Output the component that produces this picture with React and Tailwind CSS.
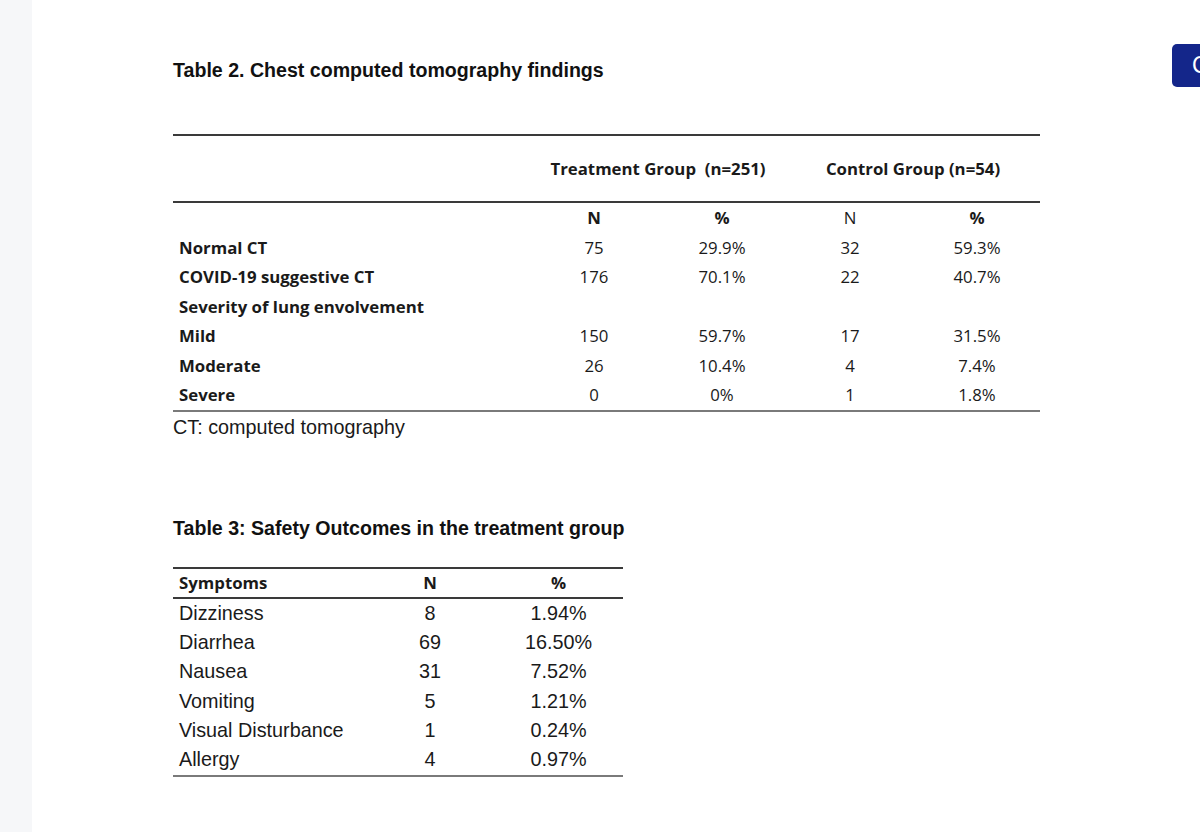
const calibri = { fontFamily: '"Open Sans", Lato, "Liberation Sans", sans-serif' };

const table2Rows = [
  ['Normal CT', '75', '29.9%', '32', '59.3%'],
  ['COVID-19 suggestive CT', '176', '70.1%', '22', '40.7%'],
  ['Severity of lung envolvement', '', '', '', ''],
  ['Mild', '150', '59.7%', '17', '31.5%'],
  ['Moderate', '26', '10.4%', '4', '7.4%'],
  ['Severe', '0', '0%', '1', '1.8%'],
];

const table3Rows = [
  ['Dizziness', '8', '1.94%'],
  ['Diarrhea', '69', '16.50%'],
  ['Nausea', '31', '7.52%'],
  ['Vomiting', '5', '1.21%'],
  ['Visual Disturbance', '1', '0.24%'],
  ['Allergy', '4', '0.97%'],
];

function ChestTable() {
  return (
    <div className="w-[867px]">
      <div className="h-[2px] bg-[#3a3a3a]" />
      {/* group header */}
      <div className="grid grid-cols-[357px_256px_254px] h-[65px] items-center text-[16.8px] font-bold text-[#1a1a1a]" style={calibri}>
        <div />
        <div className="text-center">Treatment Group&nbsp;&nbsp;(n=251)</div>
        <div className="text-center">Control Group (n=54)</div>
      </div>
      <div className="h-[2px] bg-[#3a3a3a]" />
      <div className="text-[16.8px] text-[#1a1a1a]" style={calibri}>
        <div className="grid grid-cols-[357px_128px_128px_128px_126px] h-[29.5px] items-center">
          <div />
          <div className="text-center font-bold">N</div>
          <div className="text-center font-bold">%</div>
          <div className="text-center">N</div>
          <div className="text-center font-bold">%</div>
        </div>
        {table2Rows.map((r) => (
          <div key={r[0]} className="grid grid-cols-[357px_128px_128px_128px_126px] h-[29.5px] items-center">
            <div className="pl-[6px] font-bold">{r[0]}</div>
            <div className="text-center">{r[1]}</div>
            <div className="text-center">{r[2]}</div>
            <div className="text-center">{r[3]}</div>
            <div className="text-center">{r[4]}</div>
          </div>
        ))}
      </div>
      <div className="h-[2px] bg-[#7a7a7a]" />
      <p className="text-[19.8px] leading-[30px] text-[#1a1a1a] font-['Liberation_Sans',Arial,sans-serif]">CT: computed tomography</p>
    </div>
  );
}

function SafetyTable() {
  return (
    <div className="w-[450px]">
      <div className="h-[2px] bg-[#3a3a3a]" />
      <div className="grid grid-cols-[193px_128px_129px] h-[28px] items-center text-[16.8px] font-bold text-[#1a1a1a]" style={calibri}>
        <div className="pl-[6px]">Symptoms</div>
        <div className="text-center">N</div>
        <div className="text-center">%</div>
      </div>
      <div className="h-[2px] bg-[#3a3a3a]" />
      <div className="text-[19.8px] text-[#1a1a1a] font-['Liberation_Sans',Arial,sans-serif]">
        {table3Rows.map((r) => (
          <div key={r[0]} className="grid grid-cols-[193px_128px_129px] h-[29.4px] items-center">
            <div className="pl-[6px]">{r[0]}</div>
            <div className="text-center">{r[1]}</div>
            <div className="text-center">{r[2]}</div>
          </div>
        ))}
      </div>
      <div className="h-[2px] bg-[#7a7a7a]" />
    </div>
  );
}

export default function App() {
  return (
    <div className="relative flex w-[1200px] h-[832px] overflow-hidden bg-white">
      {/* viewer gutter */}
      <div className="w-[32px] shrink-0 bg-[#f6f7f9]" />

      {/* document page */}
      <div className="flex-1 pl-[141px] pt-[58px]">
        <h2 className="text-[19.6px] leading-[24px] font-bold text-[#111] font-['Liberation_Sans',Arial,sans-serif]">
          Table 2. Chest computed tomography findings
        </h2>
        <div className="mt-[52px]">
          <ChestTable />
        </div>

        <h2 className="mt-[74px] text-[19.6px] leading-[24px] font-bold text-[#111] font-['Liberation_Sans',Arial,sans-serif]">
          Table 3: Safety Outcomes in the treatment group
        </h2>
        <div className="mt-[27px]">
          <SafetyTable />
        </div>
      </div>

      {/* floating button at the right edge */}
      <button className="absolute left-[1172px] top-[44px] w-[44px] h-[43px] rounded-[5px] bg-[#14268a] text-white text-[23px] leading-none font-['Liberation_Sans',Arial,sans-serif] text-left pl-[20px]">
        C
      </button>
    </div>
  );
}
